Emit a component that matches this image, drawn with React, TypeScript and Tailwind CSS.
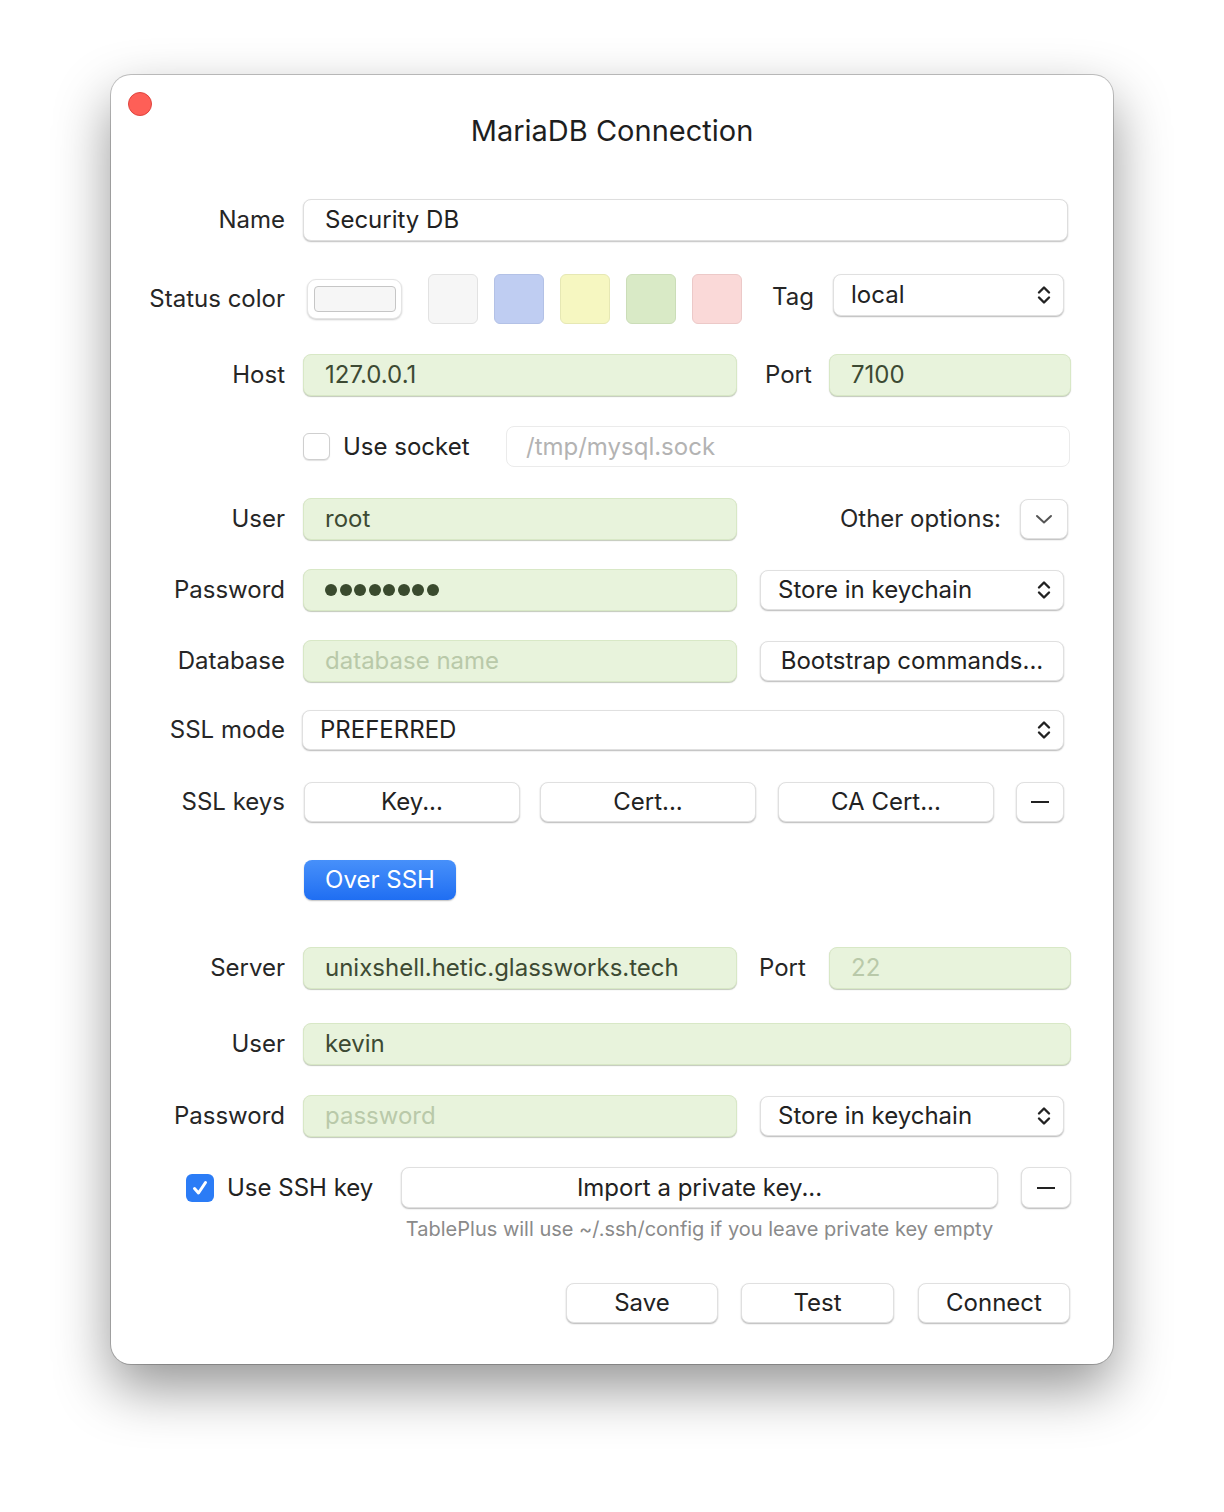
import React from "react";

const F = { fontFamily: "Inter, 'Noto Sans', 'Liberation Sans', sans-serif" } as React.CSSProperties;

function Chevrons() {
  return (
    <svg width="16" height="24" viewBox="0 0 16 24" fill="none" stroke="#222" strokeWidth="2.4" strokeLinecap="round" strokeLinejoin="round">
      <path d="M3 9.5 L8 4.5 L13 9.5" />
      <path d="M3 14.5 L8 19.5 L13 14.5" />
    </svg>
  );
}

function Label({ children }: { children: React.ReactNode }) {
  return <div className="w-[174px] shrink-0 text-right text-[24px] text-[#262626]">{children}</div>;
}

function GreenInput({ w, value, placeholder, dots }: { w: string; value?: string; placeholder?: string; dots?: boolean }) {
  return (
    <div className={`${w} h-[42px] rounded-[8px] bg-[#e8f3dc] border border-[#d8e8c6] shadow-[0_1px_1px_rgba(80,100,60,0.35)] flex items-center pl-[21px] text-[24px]`}>
      {dots ? (
        <span className="flex gap-[2.5px]">
          {Array.from({ length: 8 }).map((_, i) => (
            <span key={i} className="w-[12px] h-[12px] rounded-full bg-[#3a4a2e]" />
          ))}
        </span>
      ) : value ? (
        <span className="text-[#3d4a33]">{value}</span>
      ) : (
        <span className="text-[#b9c9a9]">{placeholder}</span>
      )}
    </div>
  );
}

function Btn({ w, h = "h-[40px]", children, className = "" }: { w: string; h?: string; children?: React.ReactNode; className?: string }) {
  return (
    <div className={`${w} ${h} shrink-0 rounded-[8px] bg-white border border-[#e0e0e0] shadow-[0_1px_1.5px_rgba(0,0,0,0.28)] flex items-center justify-center text-[24px] text-[#222] ${className}`}>
      {children}
    </div>
  );
}

function Select({ w, h = "h-[40px]", value, pl = "pl-[17px]" }: { w: string; h?: string; value: string; pl?: string }) {
  return (
    <div className={`${w} ${h} shrink-0 rounded-[8px] bg-white border border-[#e0e0e0] shadow-[0_1px_1.5px_rgba(0,0,0,0.28)] flex items-center justify-between ${pl} pr-[11px] text-[24px] text-[#222]`}>
      <span>{value}</span>
      <Chevrons />
    </div>
  );
}

function Minus() {
  return <span className="block w-[18px] h-[2px] bg-[#222]" />;
}

export default function App() {
  return (
    <div style={F} className="w-[1224px] h-[1512px] bg-white flex justify-center pt-[75px]">
      <div className="relative w-[1002px] h-[1289px] rounded-[20px] bg-white shadow-[0_24px_55px_rgba(0,0,0,0.42),0_0_0_1px_rgba(0,0,0,0.22)] flex flex-col">
        <div className="absolute left-[17px] top-[17px] w-[24px] h-[24px] rounded-full bg-[#fe5f57] border border-[#e0443e]" />
        <div className="pt-[39px] h-[34px] box-content text-center text-[29px] leading-[34px] text-[#1e1e1e]">MariaDB Connection</div>

        {/* Name */}
        <div className="mt-[51px] flex items-center gap-[18px] h-[42px]">
          <Label>Name</Label>
          <div className="w-[765px] h-[42px] rounded-[8px] bg-white border border-[#dedede] shadow-[0_1px_1.5px_rgba(0,0,0,0.25)] flex items-center pl-[21px] text-[24px] text-[#222]">Security DB</div>
        </div>

        {/* Status color */}
        <div className="mt-[33px] flex items-center gap-[18px] h-[50px]">
          <Label>Status color</Label>
          <div className="flex items-center">
            <div className="ml-[4px] w-[95px] h-[40px] rounded-[9px] bg-white border border-[#e4e4e4] shadow-[0_1px_2px_rgba(0,0,0,0.2)] flex items-center justify-center">
              <div className="w-[82px] h-[26px] rounded-[4px] bg-[#f6f6f6] border border-[#c6c6c6]" />
            </div>
            <div className="ml-[26px] flex gap-[16px]">
              <div className="w-[50px] h-[50px] rounded-[6px] bg-[#f6f6f6] border border-[#e2e2e2]" />
              <div className="w-[50px] h-[50px] rounded-[6px] bg-[#bfcdf2] border border-[#b3c1e6]" />
              <div className="w-[50px] h-[50px] rounded-[6px] bg-[#f6f7c1] border border-[#e6e8b4]" />
              <div className="w-[50px] h-[50px] rounded-[6px] bg-[#d9eac6] border border-[#cbddb8]" />
              <div className="w-[50px] h-[50px] rounded-[6px] bg-[#fad9d8] border border-[#ecc9c8]" />
            </div>
            <div className="ml-[30px] w-[39px] whitespace-nowrap text-[24px] text-[#262626] mb-[4px]">Tag</div>
            <div className="ml-[22px] mb-[9px]">
              <Select w="w-[231px]" h="h-[42px]" value="local" pl="pl-[17px]" />
            </div>
          </div>
        </div>

        {/* Host */}
        <div className="mt-[30px] flex items-center gap-[18px] h-[42px]">
          <Label>Host</Label>
          <div className="flex items-center">
            <GreenInput w="w-[434px]" value="127.0.0.1" />
            <div className="ml-[28px] w-[46px] text-[24px] text-[#262626]">Port</div>
            <div className="ml-[18px]"><GreenInput w="w-[242px]" value="7100" /></div>
          </div>
        </div>

        {/* Socket */}
        <div className="mt-[30px] flex items-center gap-[18px] h-[41px]">
          <Label>{""}</Label>
          <div className="flex items-center">
            <div className="w-[27px] h-[27px] rounded-[6px] bg-white border border-[#cfcfcf] shadow-[0_1px_1px_rgba(0,0,0,0.12)]" />
            <div className="ml-[13px] w-[163px] text-[24px] text-[#222]">Use socket</div>
            <div className="w-[564px] h-[41px] rounded-[8px] bg-white border border-[#ebebeb] flex items-center pl-[19px] text-[24px] text-[#b3b3b3]">/tmp/mysql.sock</div>
          </div>
        </div>

        {/* User */}
        <div className="mt-[31px] flex items-center gap-[18px] h-[42px]">
          <Label>User</Label>
          <div className="flex items-center w-[765px]">
            <GreenInput w="w-[434px]" value="root" />
            <div className="flex-1 flex items-center justify-end">
              <span className="text-[24px] text-[#262626] mr-[19px]">Other options:</span>
              <Btn w="w-[48px]">
                <svg width="18" height="12" viewBox="0 0 18 12" fill="none" stroke="#555" strokeWidth="2" strokeLinecap="round" strokeLinejoin="round">
                  <path d="M2 3 L9 9.5 L16 3" />
                </svg>
              </Btn>
            </div>
          </div>
        </div>

        {/* Password */}
        <div className="mt-[29px] flex items-center gap-[18px] h-[42px]">
          <Label>Password</Label>
          <div className="flex items-center">
            <GreenInput w="w-[434px]" dots />
            <div className="ml-[23px]"><Select w="w-[304px]" value="Store in keychain" /></div>
          </div>
        </div>

        {/* Database */}
        <div className="mt-[29px] flex items-center gap-[18px] h-[42px]">
          <Label>Database</Label>
          <div className="flex items-center">
            <GreenInput w="w-[434px]" placeholder="database name" />
            <div className="ml-[23px]"><Btn w="w-[304px]">Bootstrap commands...</Btn></div>
          </div>
        </div>

        {/* SSL mode */}
        <div className="mt-[28px] flex items-center gap-[17px] h-[40px]">
          <Label>SSL mode</Label>
          <Select w="w-[762px]" value="PREFERRED" />
        </div>

        {/* SSL keys */}
        <div className="mt-[32px] flex items-center gap-[18px] h-[40px]">
          <Label>SSL keys</Label>
          <div className="flex items-center ml-[1px]">
            <Btn w="w-[216px]">Key...</Btn>
            <Btn w="w-[216px]" className="ml-[20px]">Cert...</Btn>
            <Btn w="w-[216px]" className="ml-[22px]">CA Cert...</Btn>
            <Btn w="w-[48px]" className="ml-[22px]"><Minus /></Btn>
          </div>
        </div>

        {/* Over SSH */}
        <div className="mt-[38px] flex items-center gap-[18px] h-[40px]">
          <Label>{""}</Label>
          <div className="ml-[1px] w-[152px] h-[40px] rounded-[8px] bg-gradient-to-b from-[#4790fa] to-[#1f6ef2] shadow-[0_1px_1.5px_rgba(0,0,0,0.25)] flex items-center justify-center text-[24px] text-white">Over SSH</div>
        </div>

        {/* Server */}
        <div className="mt-[47px] flex items-center gap-[18px] h-[42px]">
          <Label>Server</Label>
          <div className="flex items-center">
            <GreenInput w="w-[434px]" value="unixshell.hetic.glassworks.tech" />
            <div className="ml-[22px] w-[52px] text-[24px] text-[#262626]">Port</div>
            <div className="ml-[18px]"><GreenInput w="w-[242px]" placeholder="22" /></div>
          </div>
        </div>

        {/* SSH User */}
        <div className="mt-[34px] flex items-center gap-[18px] h-[42px]">
          <Label>User</Label>
          <GreenInput w="w-[768px]" value="kevin" />
        </div>

        {/* SSH Password */}
        <div className="mt-[30px] flex items-center gap-[18px] h-[42px]">
          <Label>Password</Label>
          <div className="flex items-center">
            <GreenInput w="w-[434px]" placeholder="password" />
            <div className="ml-[23px]"><Select w="w-[304px]" value="Store in keychain" /></div>
          </div>
        </div>

        {/* Use SSH key */}
        <div className="mt-[30px] flex items-center h-[41px] pl-[75px]">
          <div className="w-[28px] h-[28px] rounded-[6px] bg-[#2b7cf6] flex items-center justify-center">
            <svg width="18" height="18" viewBox="0 0 18 18" fill="none" stroke="white" strokeWidth="3" strokeLinecap="round" strokeLinejoin="round">
              <path d="M3.5 9.5 L7.5 14 L14.5 3.5" />
            </svg>
          </div>
          <div className="ml-[13px] w-[174px] text-[24px] text-[#222]">Use SSH key</div>
          <Btn w="w-[597px]" h="h-[41px]">Import a private key...</Btn>
          <Btn w="w-[50px]" h="h-[41px]" className="ml-[23px]"><Minus /></Btn>
        </div>

        {/* Hint */}
        <div className="mt-[6px] h-[26px] pl-[290px] w-[887px] text-center text-[20px] text-[#8a8a8a]">
          TablePlus will use ~/.ssh/config if you leave private key empty
        </div>

        {/* Buttons */}
        <div className="mt-[43px] flex items-center justify-end pr-[43px] h-[40px]">
          <Btn w="w-[152px]">Save</Btn>
          <Btn w="w-[153px]" className="ml-[23px]">Test</Btn>
          <Btn w="w-[152px]" className="ml-[24px]">Connect</Btn>
        </div>
      </div>
    </div>
  );
}
